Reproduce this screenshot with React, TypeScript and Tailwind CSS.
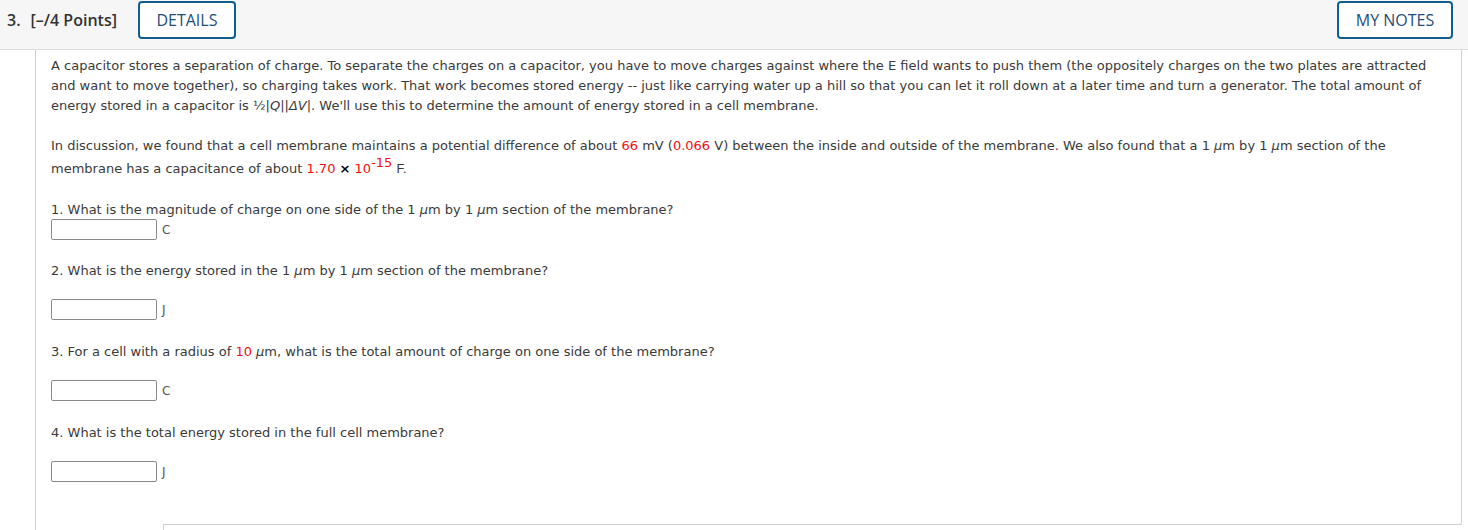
export default function App() {
  return (
    <div className="w-[1468px] h-[530px] overflow-hidden bg-white font-['DejaVu_Sans',Verdana,sans-serif] text-[13px] text-[#3a3a3a]">
      {/* Header */}
      <div className="h-[50px] bg-[#f6f6f6] border-b border-[#dcdcdc] flex items-start pt-px pr-[15px] font-['Open_Sans',sans-serif]">
        <div className="flex items-center h-[38px] pl-[7px] text-[16px] font-semibold text-[#333]">
          <span>3.</span>
          <span className="ml-[10px]">[–/4 Points]</span>
        </div>
        <button className="ml-[21px] h-[38px] w-[98px] border-2 border-[#125f8f] rounded-[4px] bg-white text-[16px] text-[#1f4e79]">
          DETAILS
        </button>
        <div className="flex-1" />
        <button className="h-[38px] w-[116px] border-2 border-[#125f8f] rounded-[4px] bg-white text-[16px] text-[#1f4e79]">
          MY NOTES
        </button>
      </div>

      {/* Body */}
      <div className="flex">
        <div className="w-[35px] shrink-0" />
        <div className="w-[1427px] border-l border-[#d0d0d0]">
          <div className="border-r border-[#d0d0d0] rounded-br-[3px] pl-[15px] pr-[16px] pt-[6px] pb-[42px] leading-[20px]">
            <p>
              A capacitor stores a separation of charge. To separate the charges on a capacitor, you have to move charges against where the E field wants to push them (the oppositely charges on the two plates are attracted and want to move together), so charging takes work. That work becomes stored energy -- just like carrying water up a hill so that you can let it roll down at a later time and turn a generator. The total amount of energy stored in a capacitor is ½|<i>Q</i>||<i>ΔV</i>|. We'll use this to determine the amount of energy stored in a cell membrane.
            </p>
            <p className="mt-[20px]">
              In discussion, we found that a cell membrane maintains a potential difference of about <span className="text-[#f01010]">66</span> mV (<span className="text-[#f01010]">0.066</span> V) between the inside and outside of the membrane. We also found that a 1 <i>μ</i>m by 1 <i>μ</i>m section of the membrane has a capacitance of about{" "}
              <span className="text-[#f01010]">1.70</span> <span className="text-black font-bold">×</span>{" "}
              <span className="text-[#f01010]">
                10<span className="text-[13px] leading-none align-[6px]">-15</span>
              </span>{" "}
              <span className="font-['Liberation_Sans',Arial,sans-serif] text-[13px]">F.</span>
            </p>

            <p className="mt-[21px]">
              1. What is the magnitude of charge on one side of the 1 <i>μ</i>m by 1 <i>μ</i>m section of the membrane?
            </p>
            <Answer unit="C" />

            <p className="mt-[21px]">
              2. What is the energy stored in the 1 <i>μ</i>m by 1 <i>μ</i>m section of the membrane?
            </p>
            <Answer unit="J" gap />

            <p className="mt-[22px]">
              3. For a cell with a radius of <span className="text-[#f01010]">10</span> <i>μ</i>m, what is the total amount of charge on one side of the membrane?
            </p>
            <Answer unit="C" gap />

            <p className="mt-[22px]">4. What is the total energy stored in the full cell membrane?</p>
            <Answer unit="J" gap />
          </div>
          <div className="ml-[127px] h-[10px] border-t border-l border-[#d0d0d0]" />
        </div>
      </div>
    </div>
  )
}

function Answer({ unit, gap }: { unit: string; gap?: boolean }) {
  return (
    <div className={`flex items-center ${gap ? 'mt-[18px]' : '-mt-px'}`}>
      <input
        type="text"
        className="w-[106px] h-[21px] border border-[#8a8a8a] rounded-[2px] bg-white outline-none"
      />
      <span className="ml-[5px] text-[12px] text-[#555]">{unit}</span>
    </div>
  )
}
